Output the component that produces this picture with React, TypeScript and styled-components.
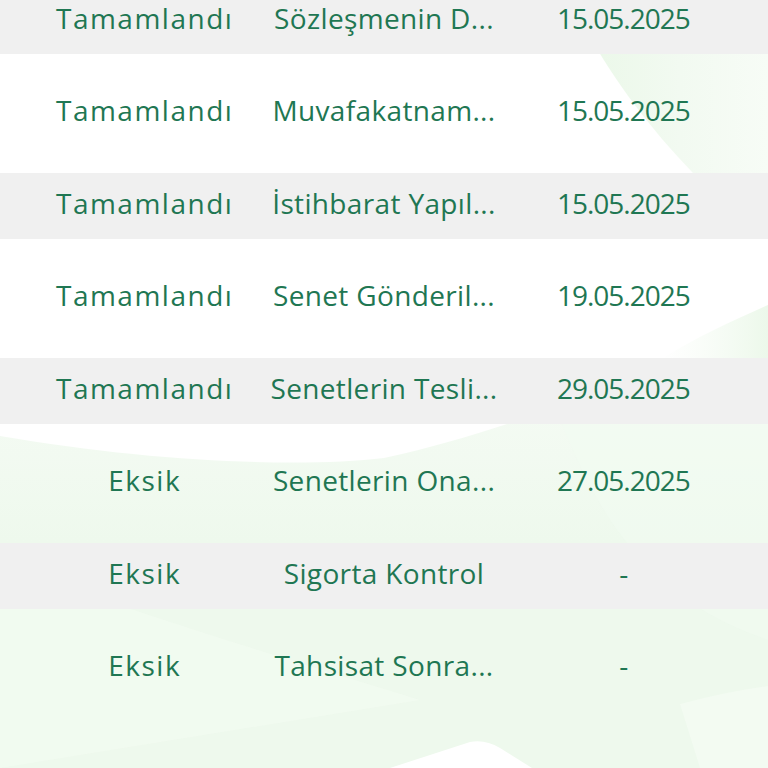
import React from "react";
import styled, { createGlobalStyle } from "styled-components";

const GlobalStyle = createGlobalStyle`
  html, body {
    margin: 0;
    padding: 0;
    background: #ffffff;
  }
  #root {
    width: 768px;
  }
`;

const Page = styled.div`
  position: relative;
  width: 768px;
  height: 768px;
  overflow: hidden;
  background: #ffffff;
  font-family: "Open Sans", "Noto Sans", sans-serif;
`;

const Backdrop = styled.svg`
  position: absolute;
  inset: 0;
  width: 768px;
  height: 768px;
  z-index: 0;
`;

const Table = styled.div`
  position: relative;
  z-index: 1;
  display: flex;
  flex-direction: column;
  gap: 26px;
  margin-top: -12.5px;
`;

const Row = styled.div<{ $striped: boolean }>`
  height: 66.5px;
  box-sizing: border-box;
  padding: 0 25px 6px;
  display: grid;
  grid-template-columns: repeat(3, 1fr);
  align-items: center;
  background: ${(p) => (p.$striped ? "#f0f0f0" : "transparent")};
`;

type Kind = "status" | "text" | "date";

const spacing: Record<Kind, string> = {
  status: "1.5px",
  text: "0.35px",
  date: "-1px",
};

const Cell = styled.div<{ $kind: Kind }>`
  text-align: center;
  white-space: nowrap;
  color: #1f7753;
  font-size: 28px;
  font-weight: 380;
  line-height: 30px;
  letter-spacing: ${(p) => spacing[p.$kind]};
`;

type Item = { status: string; title: string; date: string };

const items: Item[] = [
  { status: "Tamamlandı", title: "Sözleşmenin D...", date: "15.05.2025" },
  { status: "Tamamlandı", title: "Muvafakatnam...", date: "15.05.2025" },
  { status: "Tamamlandı", title: "İstihbarat Yapıl...", date: "15.05.2025" },
  { status: "Tamamlandı", title: "Senet Gönderil...", date: "19.05.2025" },
  { status: "Tamamlandı", title: "Senetlerin Tesli...", date: "29.05.2025" },
  { status: "Eksik", title: "Senetlerin Ona...", date: "27.05.2025" },
  { status: "Eksik", title: "Sigorta Kontrol", date: "-" },
  { status: "Eksik", title: "Tahsisat Sonra...", date: "-" },
];

const Waves = () => (
  <Backdrop viewBox="0 0 768 768" preserveAspectRatio="none">
    <defs>
      <linearGradient id="tr" x1="0" y1="0" x2="1" y2="0">
        <stop offset="0" stopColor="#ebf8e9" />
        <stop offset="0.5" stopColor="#f2faf1" />
        <stop offset="1" stopColor="#f7fcf6" />
      </linearGradient>
      <linearGradient id="low" x1="0" y1="0" x2="0" y2="1">
        <stop offset="0" stopColor="#f5fbf4" />
        <stop offset="0.4" stopColor="#eef9ed" />
        <stop offset="1" stopColor="#eef9ed" />
      </linearGradient>
      <linearGradient id="mid" x1="0" y1="0" x2="1" y2="0">
        <stop offset="0" stopColor="#f3fbf2" stopOpacity="0" />
        <stop offset="1" stopColor="#ecf8ea" />
      </linearGradient>
    </defs>
    <path d="M592 40 C 620 90, 660 140, 700 180 L 768 230 L 768 40 Z" fill="url(#tr)" />
    <path d="M660 360 C 700 335, 735 320, 768 305 L 768 380 L 660 380 Z" fill="url(#mid)" />
    <path
      d="M0 436 C 150 462, 300 468, 384 458 C 430 448, 470 436, 507 424 L 768 390 L 768 768 L 0 768 Z"
      fill="url(#low)"
    />
    <path d="M0 560 C 120 610, 260 650, 420 700 L 0 768 Z" fill="#f3fbf2" opacity="0.6" />
    <path d="M560 420 C 600 520, 650 600, 768 640 L 768 420 Z" fill="#f2fbf1" opacity="0.5" />
    <path d="M390 768 L 470 742 C 480 740, 490 742, 500 748 L 532 768 Z" fill="#ffffff" />
    <path d="M680 704 C 710 696, 740 690, 768 686 L 768 768 L 700 768 Z" fill="#f4fbf3" opacity="0.8" />
  </Backdrop>
);

export default function App() {
  return (
    <>
      <GlobalStyle />
      <Page>
        <Waves />
        <Table>
          {items.map((it, i) => (
            <Row key={i} $striped={i % 2 === 0}>
              <Cell $kind="status">{it.status}</Cell>
              <Cell $kind="text">{it.title}</Cell>
              <Cell $kind="date">{it.date}</Cell>
            </Row>
          ))}
        </Table>
      </Page>
    </>
  );
}
